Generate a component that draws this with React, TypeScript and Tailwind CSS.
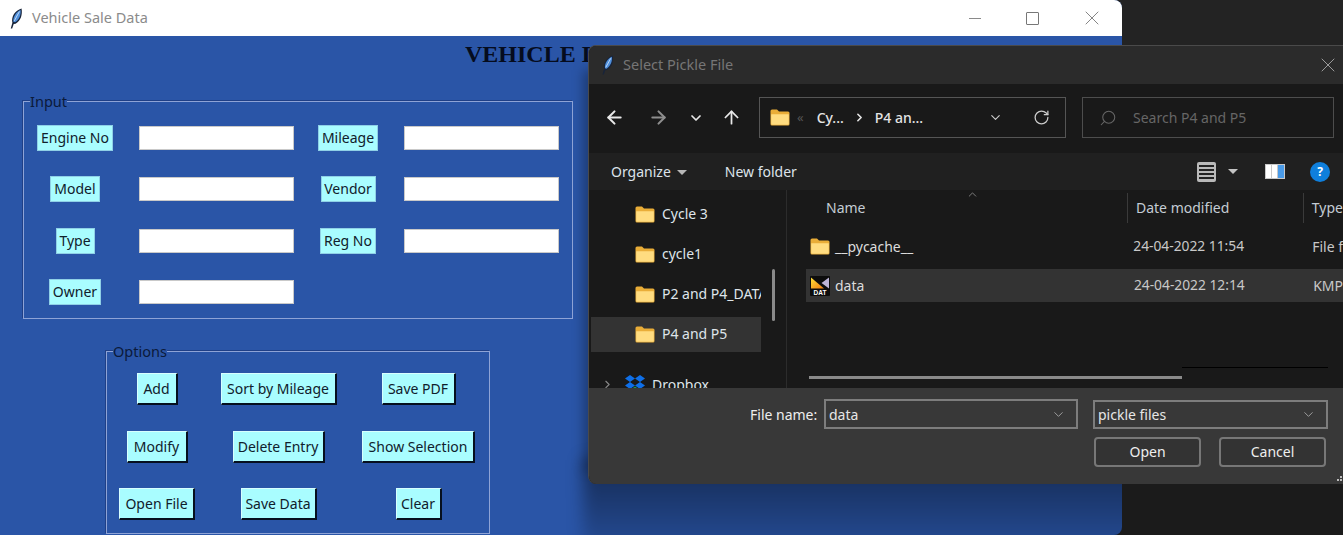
import { ArrowLeft, ArrowRight, ArrowUp, ChevronDown, ChevronRight, ChevronUp, RotateCw, Search, X } from "lucide-react";

const ui = "font-['Noto_Sans',sans-serif]";

function Feather({ className }: { className: string }) {
  return (
    <svg viewBox="0 0 14 22" className={className}>
      <path d="M1.5 21.5 L3.2 15.5 C1.8 9 6 2.5 12.8 0.5 C14 7 12 13.5 6.5 16.5 L4.6 16.8 L3 21.5 Z" fill="#18243a" />
      <path d="M4.2 14.5 C3.6 9.5 7 4 11.8 2 C12.4 7 10.5 12 6 15 Z" fill="#4f8fdb" />
      <path d="M5.2 13.5 L10.6 3.6" stroke="#c4dcf6" strokeWidth="1" />
    </svg>
  );
}

function Folder({ className }: { className: string }) {
  return (
    <svg viewBox="0 0 20 17" className={className}>
      <path d="M0.5 2 Q0.5 0.5 2 0.5 L7 0.5 L9 2.5 L18 2.5 Q19.5 2.5 19.5 4 L19.5 15 Q19.5 16.5 18 16.5 L2 16.5 Q0.5 16.5 0.5 15 Z" fill="#e9ad38" />
      <path d="M1.2 5.2 L18.8 5.2 L18.8 15 Q18.8 15.8 18 15.8 L2 15.8 Q1.2 15.8 1.2 15 Z" fill="#ffdc80" />
    </svg>
  );
}

function DatIcon() {
  return (
    <svg viewBox="0 0 20 20" className="h-[20px] w-[20px] shrink-0">
      <defs>
        <linearGradient id="dat" x1="0" y1="0" x2="1" y2="1">
          <stop offset="0" stopColor="#ffe23a" />
          <stop offset="1" stopColor="#f07a10" />
        </linearGradient>
      </defs>
      <rect width="20" height="20" rx="1" fill="#0c0c0c" />
      <path d="M1 1.5 L14 12.5 L1 12.5 Z" fill="url(#dat)" />
      <path d="M19 1.5 L19 12.5 L11.5 7 Z" fill="#bdb4d6" />
      <text x="10" y="18.6" textAnchor="middle" fontSize="6.5" fontWeight="700" fill="#fff" fontFamily="'Liberation Sans', sans-serif">DAT</text>
    </svg>
  );
}

function Dropbox() {
  return (
    <svg viewBox="0 0 20 18" className="h-[18px] w-[20px] shrink-0">
      <path d="M5 0 L10 3.5 L5 7 L0 3.5 Z M15 0 L20 3.5 L15 7 L10 3.5 Z M5 7 L10 10.5 L5 14 L0 10.5 Z M15 7 L20 10.5 L15 14 L10 10.5 Z" fill="#0f6fe8" />
      <path d="M5 15 L10 11.5 L15 15 L10 18 Z" fill="#1f9a55" />
    </svg>
  );
}

const inputRows = [
  { label: "Engine No", w: "w-[76px]", second: "Mileage", w2: "w-[60px]" },
  { label: "Model", w: "w-[50px]", second: "Vendor", w2: "w-[55px]" },
  { label: "Type", w: "w-[39px]", second: "Reg No", w2: "w-[56px]" },
  { label: "Owner", w: "w-[52px]", second: "", w2: "" },
];

const optionButtons = [
  { label: "Add", w: "w-[41px]" },
  { label: "Sort by Mileage", w: "w-[116px]" },
  { label: "Save PDF", w: "w-[74px]" },
  { label: "Modify", w: "w-[61px]" },
  { label: "Delete Entry", w: "w-[92px]" },
  { label: "Show Selection", w: "w-[113px]" },
  { label: "Open File", w: "w-[76px]" },
  { label: "Save Data", w: "w-[76px]" },
  { label: "Clear", w: "w-[46px]" },
];

function TkLabel({ text, w }: { text: string; w: string }) {
  return (
    <div className={`${w} flex h-[26px] items-center justify-center justify-self-center whitespace-nowrap border border-[#8fd0e6] bg-[#a9fdff] pb-px text-[14px] text-[#10202c]`}>
      {text}
    </div>
  );
}

function Entry() {
  return <div className="ml-px mt-px h-[24px] w-[155px] border border-[#c9c9c9] bg-white" />;
}

function MainWindow() {
  return (
    <div className={`${ui} absolute left-0 top-0 flex h-[535px] w-[1122px] flex-col overflow-hidden rounded-r-lg bg-[#2a55a7]`}>
      <div className="flex h-[36px] shrink-0 items-center bg-white pl-[9px]">
        <Feather className="h-[21px] w-[14px]" />
        <span className="ml-[9px] text-[14.5px] text-[#8b8b8b]">Vehicle Sale Data</span>
        <div className="ml-auto flex items-center pr-[18px]">
          <div className="mr-[45px] h-px w-[12px] bg-[#8a8a8a]" />
          <div className="mr-[41px] h-[13px] w-[13px] rounded-[1px] border border-[#777]" />
          <X className="h-[24px] w-[24px] text-[#777]" strokeWidth={0.9} />
        </div>
      </div>
      <h1 className="ml-[465px] mt-[2px] h-[32px] whitespace-nowrap font-['Liberation_Serif',serif] text-[24px] font-bold leading-[32px] text-[#050c1e]">VEHICLE DATA</h1>

      <div className="relative ml-[23px] mt-[31px] h-[218px] w-[550px] border border-[#8ea3d6] pl-[13px] pt-[23px] shadow-[-1px_-1px_0_#1f3f86]">
        <span className="absolute left-[6px] top-[-8px] bg-[#2a55a7] text-[14.5px] leading-[15px] text-[#0b1a3a]">Input</span>
        <div className="grid grid-cols-[76px_155px_60px_155px] gap-x-[25px] gap-y-[25.4px]">
          {inputRows.map((row) => (
            <div key={row.label} className="contents">
              <TkLabel text={row.label} w={row.w} />
              <Entry />
              {row.second ? <TkLabel text={row.second} w={row.w2} /> : <div />}
              {row.second ? <Entry /> : <div />}
            </div>
          ))}
        </div>
      </div>

      <div className="relative ml-[106px] mt-[32px] h-[183px] w-[384px] border border-[#8ea3d6] pl-[12px] pt-[21px] shadow-[-1px_-1px_0_#1f3f86]">
        <span className="absolute left-[6px] top-[-8px] bg-[#2a55a7] text-[14.5px] leading-[15px] text-[#0b1a3a]">Options</span>
        <div className="grid grid-cols-[76px_116px_113px] gap-x-[25.5px] gap-y-[25.5px]">
          {optionButtons.map((b) => (
            <button
              key={b.label}
              className={`${b.w} h-[32px] justify-self-center whitespace-nowrap border-b-2 border-l border-r-2 border-t border-b-[#06101f] border-l-[#d8ffff] border-r-[#06101f] border-t-[#d8ffff] bg-[#a9fdff] text-[14px] text-[#10202c]`}
            >
              {b.label}
            </button>
          ))}
        </div>
      </div>

      {/* the dialog's soft shadow falling on the blue */}
      <div className="absolute left-[584px] top-[70px] h-[400px] w-[12px] bg-black/35 blur-[6px]" />
      <div className="absolute left-[583px] top-[460px] h-[90px] w-[560px] bg-gradient-to-b from-black/50 to-black/10 blur-[8px]" />
    </div>
  );
}

const navItems = ["Cycle 3", "cycle1", "P2 and P4_DATA", "P4 and P5"];

function ComboBox({ text, w, h }: { text: string; w: string; h: string }) {
  return (
    <div className={`${w} ${h} flex items-center justify-between border-2 border-[#7d7d7d] bg-[#383838] pl-[3px] pr-[10px] text-[14px] text-[#e6e6e6]`}>
      <span>{text}</span>
      <ChevronDown className="h-[15px] w-[15px] text-[#aaa]" strokeWidth={1.4} />
    </div>
  );
}

function FileRow({ name, date, type, icon, active }: { name: string; date: string; type: string; icon: React.ReactNode; active?: boolean }) {
  return (
    <div className={`flex h-[33px] items-center pl-[4px] text-[14px] text-[#dcdcdc] ${active ? "bg-[#333333]" : ""}`}>
      <div className="flex w-[327px] items-center gap-[5px]">
        {icon}
        <span>{name}</span>
      </div>
      <span className="w-[181px] text-[13.8px] text-[#c8c8c8]">{date}</span>
      <span className="whitespace-nowrap text-[#c8c8c8]">{type}</span>
    </div>
  );
}

function Dialog() {
  return (
    <div className={`${ui} absolute left-[588px] top-[45px] flex h-[439px] w-[755px] flex-col overflow-hidden rounded-l-lg border-l border-t border-[#4a4a4a] bg-[#191919]`}>
      <div className="flex h-[38px] shrink-0 items-center bg-[#2b2b2b] pl-[12px] pr-[3px]">
        <Feather className="h-[20px] w-[13px]" />
        <span className="ml-[9px] text-[14.5px] text-[#767676]">Select Pickle File</span>
        <X className="ml-auto h-[24px] w-[24px] text-[#a8a8a8]" strokeWidth={0.9} />
      </div>

      <div className="flex h-[69px] shrink-0 items-center bg-[#191919] pb-[2px] pl-[15px] text-[#e8e8e8]">
        <ArrowLeft className="h-[21px] w-[21px]" strokeWidth={2.4} />
        <ArrowRight className="ml-[23px] h-[21px] w-[21px] text-[#8e8e8e]" strokeWidth={2.4} />
        <ChevronDown className="ml-[19px] h-[16px] w-[16px]" strokeWidth={2.6} />
        <ArrowUp className="ml-[17px] h-[21px] w-[21px]" strokeWidth={2} />
        <div className="ml-[17px] flex h-[41px] w-[307px] items-center border border-[#555] pl-[10px] text-[14px] text-[#e4e4e4]">
          <Folder className="h-[17px] w-[20px]" />
          <span className="ml-[7px] text-[13px] text-[#555]">«</span>
          <span className="ml-[13px] font-medium">Cy...</span>
          <ChevronRight className="ml-[9px] h-[13px] w-[13px]" strokeWidth={3} />
          <span className="ml-[9px] font-medium">P4 an...</span>
          <ChevronDown className="ml-[65px] h-[15px] w-[15px] text-[#ccc]" strokeWidth={1.8} />
          <RotateCw className="ml-[30px] h-[17px] w-[17px] text-[#ccc]" strokeWidth={1.8} />
        </div>
        <div className="ml-[16px] flex h-[41px] w-[252px] items-center border border-[#4d4d4d] pl-[16px] text-[14px] text-[#666]">
          <Search className="h-[18px] w-[18px] -scale-x-100 text-[#666]" strokeWidth={1.4} />
          <span className="ml-[16px]">Search P4 and P5</span>
        </div>
      </div>

      <div className="flex h-[37px] shrink-0 items-center bg-[#202020] pl-[22px] text-[14px] text-[#dde3ea]">
        <span>Organize</span>
        <div className="ml-[6px] mt-[1px] h-0 w-0 border-x-[5px] border-t-[5px] border-x-transparent border-t-[#b8b8b8]" />
        <span className="ml-[38px]">New folder</span>
        <div className="ml-auto flex h-[20px] w-[19px] flex-col justify-center gap-[2px] rounded-[2px] bg-[#b9b9b9] px-[2px]">
          <div className="h-[2px] bg-[#222]" />
          <div className="h-[2px] bg-[#222]" />
          <div className="h-[2px] bg-[#222]" />
          <div className="h-[2px] bg-[#222]" />
        </div>
        <div className="ml-[12px] h-0 w-0 border-x-[5px] border-t-[5px] border-x-transparent border-t-[#c4c4c4]" />
        <div className="ml-[27px] flex h-[15px] w-[20px] gap-px bg-[#c8c8c8] p-[1px]">
          <div className="w-[5px] bg-white" />
          <div className="w-[5px] bg-white" />
          <div className="flex-1 bg-[#4a9be8]" />
        </div>
        <div className="ml-[25px] mr-[13px] flex h-[20px] w-[20px] items-center justify-center rounded-full bg-[#0f7fdc] text-[12px] font-bold text-white">?</div>
      </div>

      <div className="relative flex min-h-0 flex-1 overflow-hidden bg-[#191919]">
        <div className="w-[198px] shrink-0 border-r border-[#2c2c2c] pl-[2px] pt-[4px]">
          {navItems.map((item) => (
            <div key={item} className="flex h-[40px] w-[170px] items-center">
              <div className={`flex h-[35px] w-full items-center overflow-hidden whitespace-nowrap pl-[44px] text-[14px] text-[#dfe5ea] ${item === "P4 and P5" ? "bg-[#333333]" : ""}`}>
                <Folder className="h-[17px] w-[20px] shrink-0" />
                <span className="mb-[2px] ml-[7px]">{item}</span>
              </div>
            </div>
          ))}
          <div className="flex h-[40px] items-center whitespace-nowrap pl-[10px] pt-[20px] text-[14px] text-[#dfe5ea]">
            <ChevronRight className="h-[13px] w-[13px] text-[#888]" strokeWidth={2} />
            <span className="ml-[11px]"><Dropbox /></span>
            <span className="ml-[7px]">Dropbox</span>
          </div>
        </div>

        <div className="flex min-w-0 flex-1 flex-col pl-[19px]">
          <div className="flex h-[35px] shrink-0 items-center pl-[20px] text-[14px] text-[#c4ccd4]">
            <span className="w-[301px] shrink-0">Name</span>
            <div className="h-[30px] w-px bg-[#3a3a3a]" />
            <span className="ml-[8px] w-[171px]">Date modified</span>
            <div className="h-[30px] w-px bg-[#3a3a3a]" />
            <span className="ml-[8px]">Type</span>
          </div>
          <div className="mt-[5px]">
            <FileRow name="__pycache__" date="24-04-2022 11:54" type="File f" icon={<Folder className="h-[17px] w-[20px] shrink-0" />} />
          </div>
          <div className="mt-[6px]">
            <FileRow name="data" date="24-04-2022 12:14" type="KMP" icon={<DatIcon />} active />
          </div>
        </div>

        {/* scrollbars lie over the panes */}
        <div className="absolute left-[183px] top-[79px] h-[52px] w-[3px] rounded-full bg-[#8a8a8a]" />
        <ChevronUp className="absolute left-[377px] top-[-2px] h-[13px] w-[13px] text-[#8a8a8a]" strokeWidth={1.6} />
        <div className="absolute bottom-[9px] left-[220px] h-[3px] w-[373px] bg-[#8a8a8a]" />
        <div className="absolute bottom-[20px] left-[593px] h-px w-[146px] bg-black" />
      </div>

      <div className="relative flex h-[96px] shrink-0 flex-col bg-[#383838] pl-[161px] pt-[11px]">
        <div className="flex items-center">
          <span className="w-[74px] text-[14px] text-[#eee]">File name:</span>
          <ComboBox text="data" w="w-[254px]" h="h-[30px]" />
          <div className="ml-[15px]">
            <ComboBox text="pickle files" w="w-[235px]" h="h-[29px]" />
          </div>
        </div>
        <div className="ml-[344px] mt-[8px] flex gap-[18px]">
          <button className="h-[30px] w-[107px] rounded-[4px] border-2 border-[#777] bg-[#333] pb-[2px] text-[14px] text-[#eee]">Open</button>
          <button className="h-[30px] w-[107px] rounded-[4px] border-2 border-[#777] bg-[#333] pb-[2px] text-[14px] text-[#eee]">Cancel</button>
        </div>
        <div className="absolute bottom-[3px] right-[1px] grid grid-cols-3 gap-px">
          <div />
          <div />
          <div className="h-[2px] w-[2px] bg-[#bbb]" />
          <div />
          <div className="h-[2px] w-[2px] bg-[#bbb]" />
          <div className="h-[2px] w-[2px] bg-[#bbb]" />
        </div>
      </div>
    </div>
  );
}

export default function App() {
  return (
    <div className="relative h-[535px] w-[1343px] overflow-hidden bg-[#1b1b1b]">
      <div className="h-[45px] bg-[#232323]" />
      <MainWindow />
      <Dialog />
    </div>
  );
}
